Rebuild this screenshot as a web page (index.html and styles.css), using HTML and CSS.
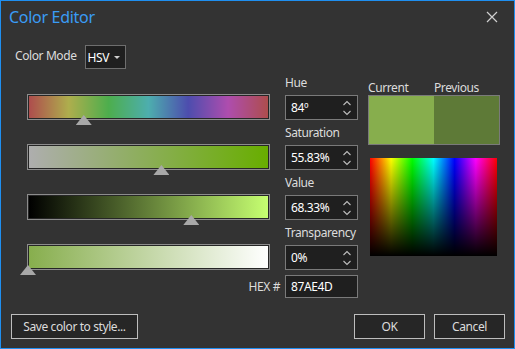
FILE: index.html
```html
<!DOCTYPE html>
<html lang="en">
<head>
  <meta charset="UTF-8">
  <title>Color Editor</title>
  <link rel="stylesheet" href="styles.css">
</head>
<body>

  <div class="window">

    <!-- Title bar -->
    <div class="titlebar">
      <div class="title">Color Editor</div>
      <svg class="close" width="12" height="12" viewBox="0 0 12 12">
        <path d="M1 1 L11 11 M11 1 L1 11" stroke="#cfcfcf" stroke-width="1.2" fill="none"/>
      </svg>
    </div>

    <!-- Color mode -->
    <div class="mode-row">
      <span class="label">Color Mode</span>
      <div class="dropdown">HSV <span class="caret"></span></div>
    </div>

    <div class="main">

      <!-- Sliders -->
      <div class="sliders">
        <div class="bar">
          <div class="fill hue">
            <div class="thumb" style="left: 23.33%;"></div>
          </div>
        </div>
        <div class="bar">
          <div class="fill sat">
            <div class="thumb" style="left: 55.83%;"></div>
          </div>
        </div>
        <div class="bar">
          <div class="fill val">
            <div class="thumb" style="left: 68.33%;"></div>
          </div>
        </div>
        <div class="bar">
          <div class="fill alpha">
            <div class="thumb" style="left: 0%;"></div>
          </div>
        </div>
      </div>

      <!-- Number fields -->
      <div class="fields">
        <div class="field">
          <div class="label">Hue</div>
          <div class="input">84º <svg class="spin" width="10" height="16" viewBox="0 0 10 16"><path d="M1.5 5 L5 1.5 L8.5 5 M1.5 11 L5 14.5 L8.5 11" stroke="#bdbdbd" stroke-width="1.1" fill="none"/></svg></div>
        </div>
        <div class="field">
          <div class="label">Saturation</div>
          <div class="input">55.83% <svg class="spin" width="10" height="16" viewBox="0 0 10 16"><path d="M1.5 5 L5 1.5 L8.5 5 M1.5 11 L5 14.5 L8.5 11" stroke="#bdbdbd" stroke-width="1.1" fill="none"/></svg></div>
        </div>
        <div class="field">
          <div class="label">Value</div>
          <div class="input">68.33% <svg class="spin" width="10" height="16" viewBox="0 0 10 16"><path d="M1.5 5 L5 1.5 L8.5 5 M1.5 11 L5 14.5 L8.5 11" stroke="#bdbdbd" stroke-width="1.1" fill="none"/></svg></div>
        </div>
        <div class="field">
          <div class="label">Transparency</div>
          <div class="input">0% <svg class="spin" width="10" height="16" viewBox="0 0 10 16"><path d="M1.5 5 L5 1.5 L8.5 5 M1.5 11 L5 14.5 L8.5 11" stroke="#bdbdbd" stroke-width="1.1" fill="none"/></svg></div>
        </div>
        <div class="hex-row">
          <span class="label">HEX #</span>
          <div class="input hex">87AE4D</div>
        </div>
      </div>

      <!-- Preview -->
      <div class="preview">
        <div class="preview-labels">
          <span>Current</span>
          <span>Previous</span>
        </div>
        <div class="swatches">
          <div class="swatch current"></div>
          <div class="swatch previous"></div>
        </div>
        <div class="spectrum"></div>
      </div>

    </div>

    <!-- Buttons -->
    <div class="footer">
      <button class="btn save">Save color to style...</button>
      <div class="right-btns">
        <button class="btn">OK</button>
        <button class="btn">Cancel</button>
      </div>
    </div>

  </div>

</body>
</html>
```

FILE: styles.css
```css
body {
  margin: 0;
  font-family: "Noto Sans", "Open Sans", sans-serif;
  font-size: 12px;
  letter-spacing: -0.4px;
  color: #dcdcdc;
  background-color: #333333;
}

.window {
  width: 515px;
  height: 349px;
  box-sizing: border-box;
  border: 1px solid #1f8ff0;
  background-color: #333333;
  display: flex;
  flex-direction: column;
}

/* Title bar */
.titlebar {
  height: 32px;
  display: flex;
  justify-content: space-between;
  align-items: center;
  padding: 0 16px 0 8px;
}

.title {
  color: #3a9cf6;
  font-size: 16px;
  letter-spacing: -0.3px;
}

.close {
  display: block;
}

/* Color mode */
.mode-row {
  display: flex;
  align-items: center;
  margin-top: 12px;
  padding-left: 14px;
  gap: 8px;
}

.dropdown {
  width: 41px;
  height: 24px;
  box-sizing: border-box;
  border: 1px solid #6e6e6e;
  background-color: #1f1f1f;
  color: #ffffff;
  display: flex;
  align-items: center;
  padding-left: 2px;
  gap: 5px;
}

.caret {
  width: 0;
  height: 0;
  border-left: 3px solid transparent;
  border-right: 3px solid transparent;
  border-top: 3px solid #cfcfcf;
}

/* Main area */
.main {
  display: flex;
  margin-top: 6px;
}

.sliders {
  width: 243px;
  margin-left: 26px;
  padding-top: 19px;
}

.bar {
  height: 26px;
  box-sizing: border-box;
  border: 1px solid #8c8c8c;
  padding: 1px;
  background-color: #262626;
  margin-bottom: 24px;
}

.fill {
  position: relative;
  height: 100%;
}

.hue {
  background: linear-gradient(to right, #ae4d4d, #aeae4d 16.6%, #4dae4d 33.3%, #4daeae 50%, #4d4dae 66.6%, #ae4dae 83.3%, #ae4d4d);
}

.sat {
  background: linear-gradient(to right, #aeaeae, #68ae00);
}

.val {
  background: linear-gradient(to right, #000000, #c6ff71);
}

.alpha {
  background: linear-gradient(to right, #87ae4d, #ffffff);
}

.thumb {
  position: absolute;
  top: calc(100% - 3px);
  width: 16px;
  height: 10px;
  margin-left: -9px;
  background-color: #a8a8a8;
  clip-path: polygon(50% 0, 100% 100%, 0 100%);
}

/* Fields */
.fields {
  width: 73px;
  margin-left: 15px;
}

.field {
  margin-bottom: 5px;
}

.label {
  line-height: 17px;
  margin-bottom: 3px;
  color: #dcdcdc;
}

.fields .label {
  margin-top: -1px;
  margin-bottom: 4px;
}

.input {
  height: 25px;
  box-sizing: border-box;
  border: 1px solid #7a7a7a;
  background-color: #1f1f1f;
  color: #ffffff;
  display: flex;
  align-items: center;
  justify-content: space-between;
  padding: 0 5px 0 5px;
}

.spin {
  display: block;
}

.hex-row {
  display: flex;
  align-items: center;
  justify-content: flex-end;
  gap: 5px;
  margin-left: -40px;
  margin-top: 5px;
}

.fields .hex-row .label {
  margin: 0;
}

.input.hex {
  width: 73px;
  height: 23px;
}

/* Preview */
.preview {
  width: 132px;
  margin-left: 10px;
  padding-top: 5px;
}

.preview-labels {
  display: flex;
  line-height: 16px;
  margin-bottom: -1px;
}

.preview-labels span {
  width: 66px;
}

.swatches {
  display: flex;
  height: 50px;
  box-sizing: border-box;
  border: 1px solid #7a7a7a;
}

.swatch {
  flex: 1;
}

.current {
  background-color: #87ae4d;
}

.previous {
  background-color: #5e7a37;
}

.spectrum {
  width: 127px;
  height: 98px;
  margin: 13px 0 0 2px;
  background:
    linear-gradient(to bottom, rgba(0, 0, 0, 0), #000000),
    linear-gradient(to right, #ff0000, #ffff00 16.6%, #00ff00 33.3%, #00ffff 50%, #0000ff 66.6%, #ff00ff 83.3%, #ff0000);
}

/* Footer */
.footer {
  margin-top: auto;
  display: flex;
  justify-content: space-between;
  padding: 0 9px 9px 10px;
}

.right-btns {
  display: flex;
  gap: 9px;
}

.btn {
  height: 25px;
  width: 71px;
  box-sizing: border-box;
  border: 1px solid #bdbdbd;
  background-color: #262626;
  color: #dcdcdc;
  font-family: "Noto Sans", "Open Sans", sans-serif;
  font-size: 12px;
  letter-spacing: -0.4px;
  padding: 0;
}

.btn.save {
  width: 127px;
}
```
